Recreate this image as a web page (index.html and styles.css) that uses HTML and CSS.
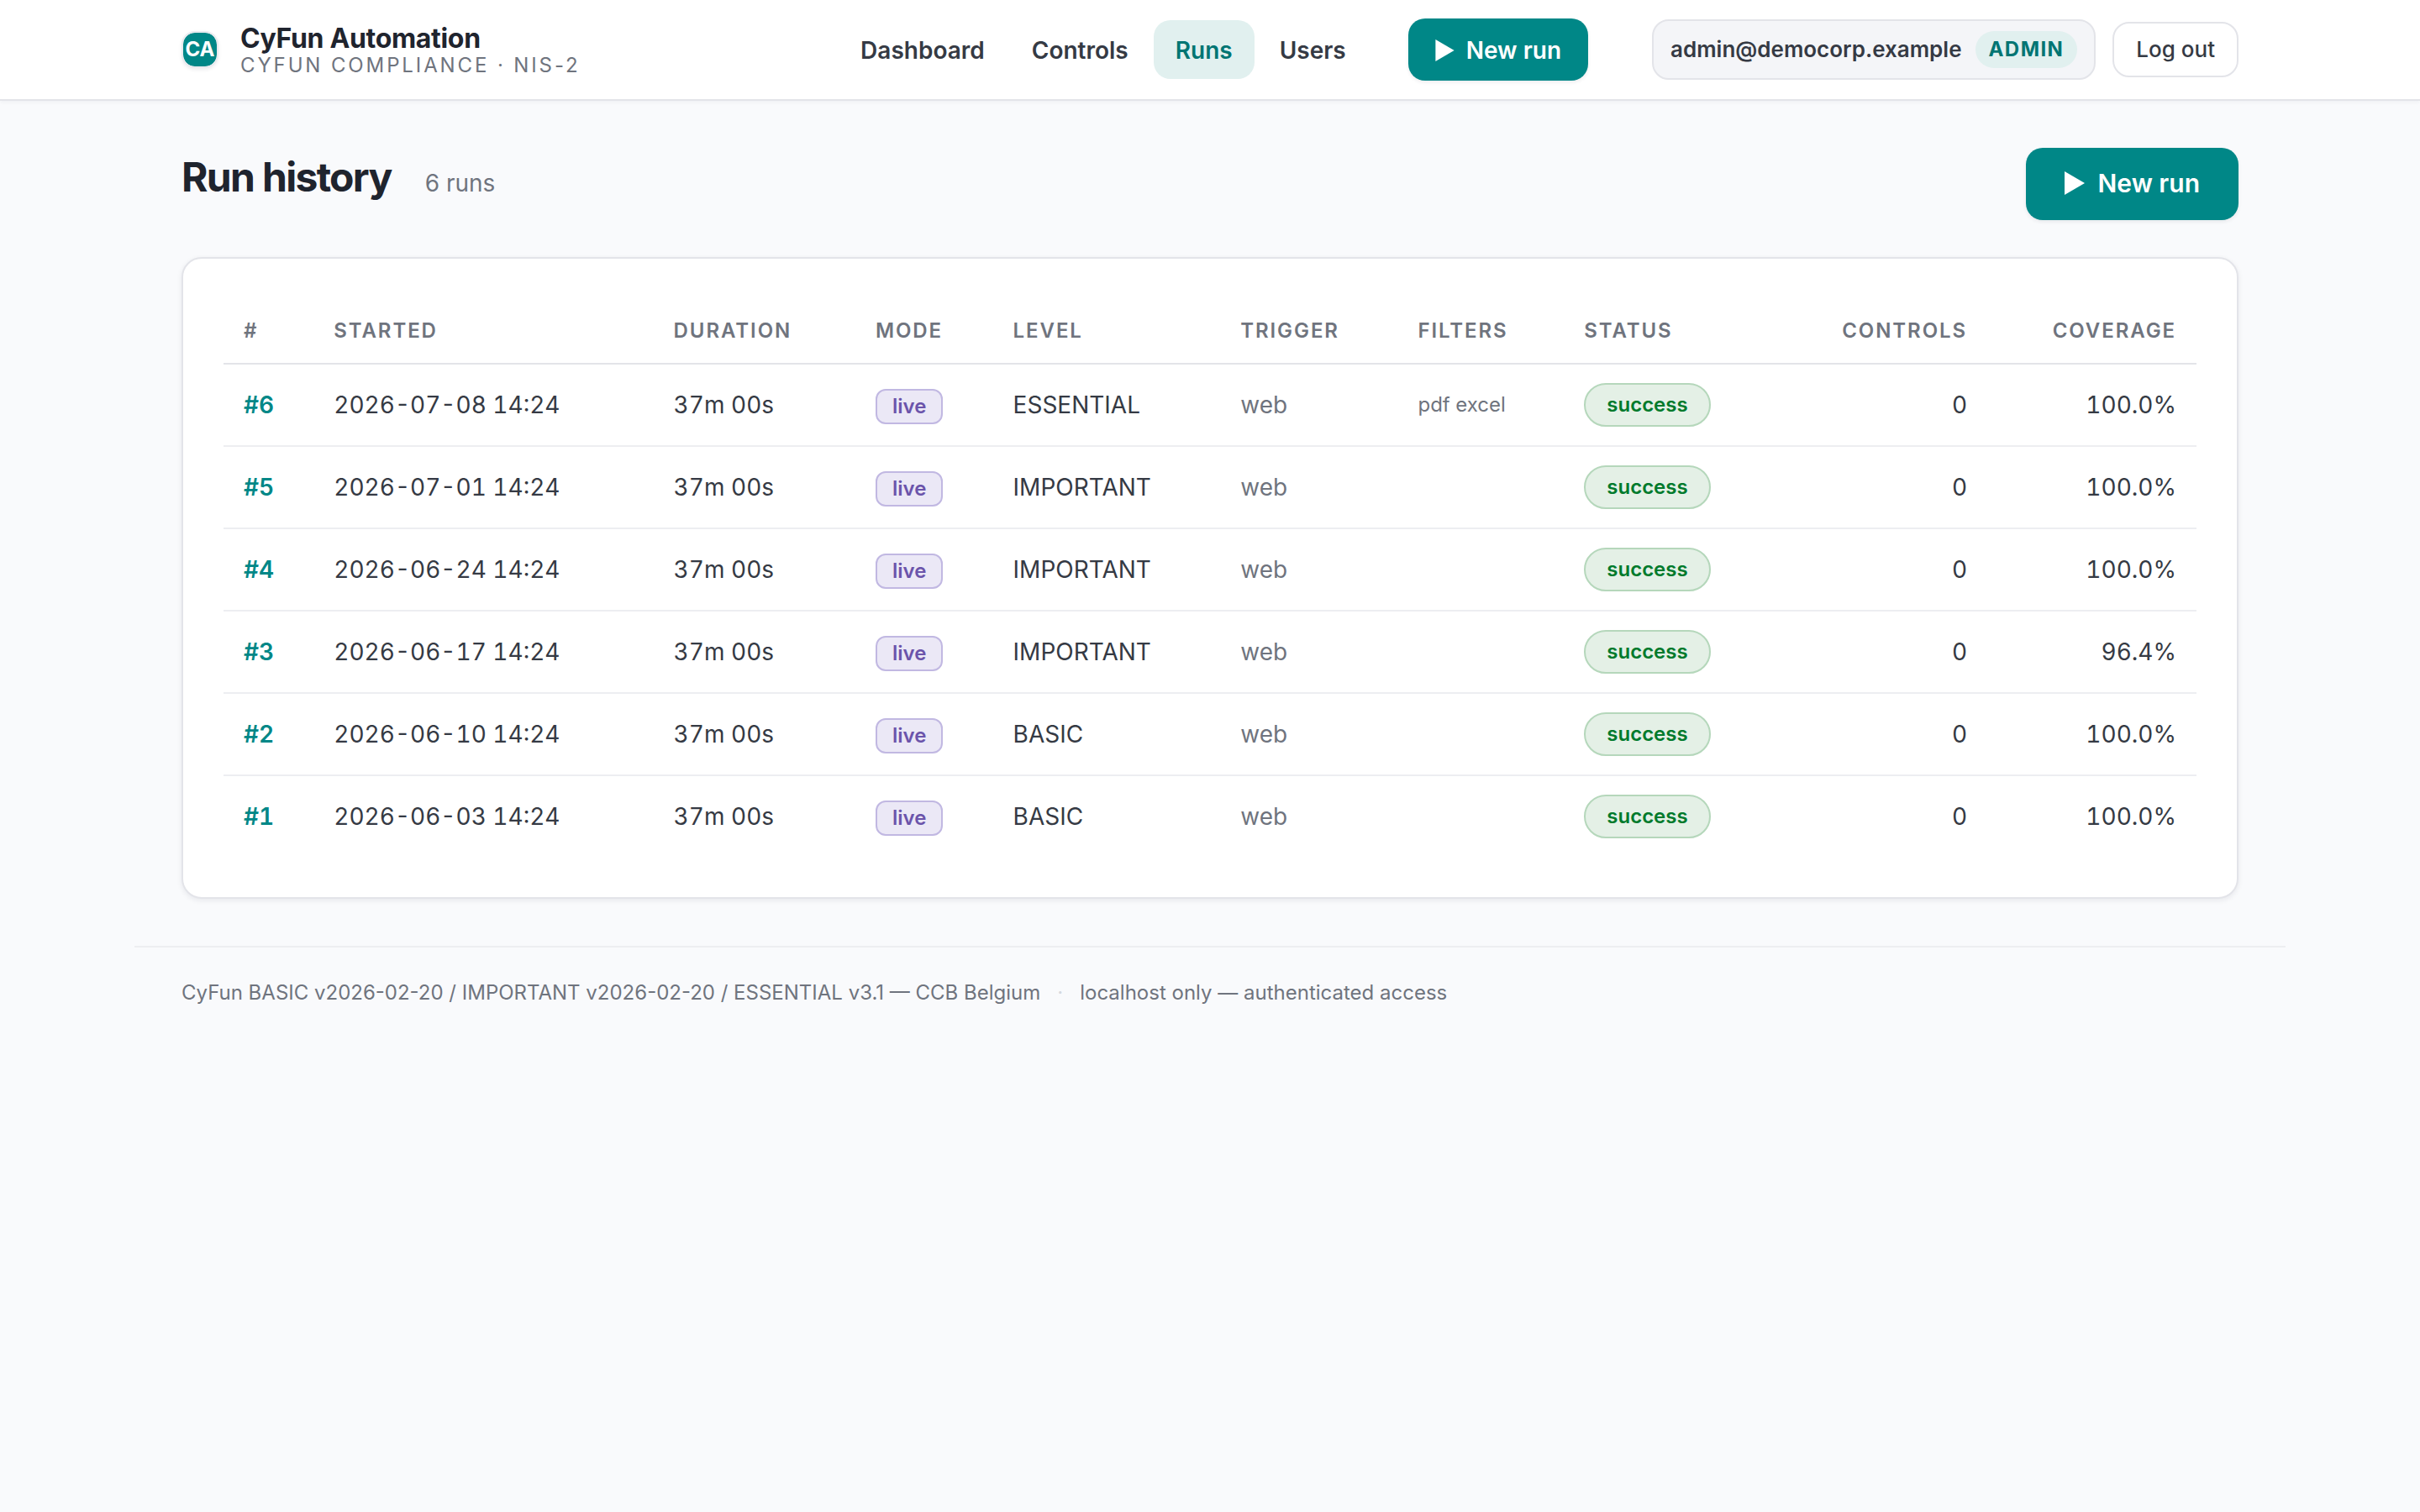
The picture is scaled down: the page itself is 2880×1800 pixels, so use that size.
FILE: index.html
```html
<!DOCTYPE html>
<html lang="en">
<head>
<meta charset="utf-8">
<title>Run history – CyFun Automation</title>
<link rel="stylesheet" href="styles.css">
</head>
<body>
<header class="topbar">
  <div class="topbar-inner">
    <a class="brand" href="#">
      <span class="logo">CA</span>
      <span class="brand-text">
        <span class="brand-name">CyFun Automation</span>
        <span class="brand-sub">CYFUN COMPLIANCE · NIS-2</span>
      </span>
    </a>
    <nav class="nav">
      <a class="nav-link" href="#">Dashboard</a>
      <a class="nav-link" href="#">Controls</a>
      <a class="nav-link active" href="#" aria-current="page">Runs</a>
      <a class="nav-link" href="#">Users</a>
    </nav>
    <a class="btn btn-nav" href="#"><svg class="play" viewBox="0 0 24 28" aria-hidden="true"><path d="M0 0L24 14L0 28Z"/></svg>New run</a>
    <div class="account">
      <span class="user">admin@democorp.example <span class="role">ADMIN</span></span>
      <button class="logout" type="button">Log out</button>
    </div>
  </div>
</header>
<main class="page">
  <div class="page-head">
    <div class="heading">
      <h1 class="title">Run history</h1>
      <span class="count">6 runs</span>
    </div>
    <a class="btn btn-large" href="#"><svg class="play" viewBox="0 0 24 28" aria-hidden="true"><path d="M0 0L24 14L0 28Z"/></svg>New run</a>
  </div>
  <section class="card">
    <table class="runs">
      <thead>
        <tr><th>#</th><th>STARTED</th><th>DURATION</th><th>MODE</th><th>LEVEL</th><th>TRIGGER</th><th>FILTERS</th><th>STATUS</th><th class="num">CONTROLS</th><th class="num">COVERAGE</th></tr>
      </thead>
      <tbody>
        <tr><td><a class="run-id" href="#">#6</a></td><td>2026-07-08 14:24</td><td>37m 00s</td><td><span class="mode">live</span></td><td>ESSENTIAL</td><td class="muted">web</td><td class="filters">pdf excel</td><td><span class="status">success</span></td><td class="num">0</td><td class="num">100.0%</td></tr>
        <tr><td><a class="run-id" href="#">#5</a></td><td>2026-07-01 14:24</td><td>37m 00s</td><td><span class="mode">live</span></td><td>IMPORTANT</td><td class="muted">web</td><td class="filters"></td><td><span class="status">success</span></td><td class="num">0</td><td class="num">100.0%</td></tr>
        <tr><td><a class="run-id" href="#">#4</a></td><td>2026-06-24 14:24</td><td>37m 00s</td><td><span class="mode">live</span></td><td>IMPORTANT</td><td class="muted">web</td><td class="filters"></td><td><span class="status">success</span></td><td class="num">0</td><td class="num">100.0%</td></tr>
        <tr><td><a class="run-id" href="#">#3</a></td><td>2026-06-17 14:24</td><td>37m 00s</td><td><span class="mode">live</span></td><td>IMPORTANT</td><td class="muted">web</td><td class="filters"></td><td><span class="status">success</span></td><td class="num">0</td><td class="num">96.4%</td></tr>
        <tr><td><a class="run-id" href="#">#2</a></td><td>2026-06-10 14:24</td><td>37m 00s</td><td><span class="mode">live</span></td><td>BASIC</td><td class="muted">web</td><td class="filters"></td><td><span class="status">success</span></td><td class="num">0</td><td class="num">100.0%</td></tr>
        <tr><td><a class="run-id" href="#">#1</a></td><td>2026-06-03 14:24</td><td>37m 00s</td><td><span class="mode">live</span></td><td>BASIC</td><td class="muted">web</td><td class="filters"></td><td><span class="status">success</span></td><td class="num">0</td><td class="num">100.0%</td></tr>
      </tbody>
    </table>
  </section>
</main>
<footer class="footer">
  <span>CyFun BASIC v2026-02-20 / IMPORTANT v2026-02-20 / ESSENTIAL v3.1 — CCB Belgium</span>
  <span class="sep">·</span>
  <span>localhost only — authenticated access</span>
</footer>
</body>
</html>
```
FILE: styles.css
```css
*, *::before, *::after { box-sizing: border-box; }

body {
  margin: 0;
  background: #f9fafc;
  color: #353a44;
  font-family: Inter, "Liberation Sans", sans-serif;
  font-size: 28px;
  line-height: 44px;
}

a { color: inherit; text-decoration: none; }

.topbar {
  background: #fff;
  border-bottom: 2px solid #e3e4e9;
  box-shadow: 0 2px 4px rgba(20, 30, 45, 0.04);
}

.topbar-inner {
  display: flex;
  align-items: center;
  max-width: 2560px;
  height: 118px;
  margin: 0 auto;
  padding: 0 56px;
}

.brand { display: flex; align-items: center; gap: 26px; margin-right: auto; }

.logo {
  display: flex;
  align-items: center;
  justify-content: center;
  width: 44px;
  height: 44px;
  border: 2px solid #e9eaee;
  border-radius: 16px;
  background: #008787;
  background-clip: padding-box;
  box-shadow: 0 2px 4px rgba(20, 30, 45, 0.08);
  color: #fff;
  font-size: 24px;
  font-weight: 700;
}

.brand-text { display: flex; flex-direction: column; padding-top: 2px; }
.brand-name { color: #1f242e; font-size: 32px; font-weight: 700; line-height: 36px; letter-spacing: -0.01em; }
.brand-sub { color: #6f747e; font-size: 24px; line-height: 28px; letter-spacing: 0.12em; }

.nav { display: flex; gap: 4px; }
.nav-link { padding: 14px 26px 12px; border-radius: 20px; font-weight: 600; }
.nav-link.active { background: #e1f0ef; color: #007573; }

.btn {
  display: inline-flex;
  align-items: center;
  border-radius: 20px;
  background: #008787;
  box-shadow: 0 2px 4px rgba(20, 30, 45, 0.08);
  color: #fff;
  font-weight: 600;
}
.btn-nav { gap: 14px; margin-left: 48px; padding: 16px 32px 14px; }
.btn-large { gap: 16px; padding: 20px 46px 22px; font-size: 30px; }
.play { width: 23px; height: 26px; fill: currentColor; }
.btn-large .play { width: 24px; height: 28px; }

.account { display: flex; align-items: center; gap: 20px; margin-left: 76px; }
.user {
  display: flex;
  align-items: center;
  gap: 16px;
  height: 72px;
  padding: 0 20px;
  border: 2px solid #e3e4e9;
  border-radius: 20px;
  background: #f4f5f8;
  font-size: 26px;
  font-weight: 600;
}
.role {
  padding: 0 16px;
  border-radius: 22px;
  background: #e1f0ef;
  color: #007573;
  font-size: 24px;
  font-weight: 700;
  letter-spacing: 0.06em;
}
.logout {
  height: 66px;
  padding: 0 26px;
  border: 2px solid #e3e4e9;
  border-radius: 20px;
  background: #fff;
  color: inherit;
  font: inherit;
  font-size: 26px;
  font-weight: 500;
}

.page { max-width: 2560px; margin: 0 auto; padding: 56px 56px; }
.page-head { display: flex; justify-content: space-between; margin-bottom: 44px; }
.heading { display: flex; align-items: baseline; gap: 40px; }
.title { margin: 0; color: #1f242e; font-size: 48px; font-weight: 700; line-height: 70px; letter-spacing: -0.035em; }
.count { color: #6f747e; }

.card {
  padding: 48px;
  border: 2px solid #e3e4e9;
  border-radius: 24px;
  background: #fff;
  box-shadow: 0 2px 6px rgba(20, 30, 45, 0.08);
}

.runs { width: 100%; border-collapse: separate; border-spacing: 0; font-variant-numeric: tabular-nums; }
.runs th {
  height: 78px;
  padding: 0 24px;
  border-bottom: 2px solid #e3e4e9;
  color: #6f747e;
  font-size: 24px;
  font-weight: 600;
  letter-spacing: 0.08em;
  text-align: left;
}
.runs td { height: 98px; padding: 0 24px; border-bottom: 2px solid #edeef1; white-space: nowrap; }
.runs tr:last-child td { height: 96px; border-bottom: 0; }
.runs thead tr:last-child th { height: 78px; }
.runs .num { text-align: right; }
.runs .muted { color: #6f747e; }
.runs .filters { color: #6f747e; font-size: 24px; }
.run-id { color: #008787; font-weight: 600; }

.mode, .status { display: inline-block; border: 2px solid; font-size: 24px; font-weight: 600; vertical-align: middle; }
.mode { padding: 0 18px; border-color: #c1b8e2; border-radius: 12px; background: #ebe8f6; color: #6b54ab; line-height: 38px; }
.status { padding: 0 25px; border-color: #b5d7bb; border-radius: 26px; background: #e4f0e6; color: #007a2c; line-height: 48px; }

.footer {
  display: flex;
  gap: 20px;
  max-width: 2560px;
  margin: 0 auto;
  padding: 32px 56px;
  border-top: 2px solid #edeef1;
  color: #6f747e;
  font-size: 24px;
}
.sep { color: #d5d8de; }
```
